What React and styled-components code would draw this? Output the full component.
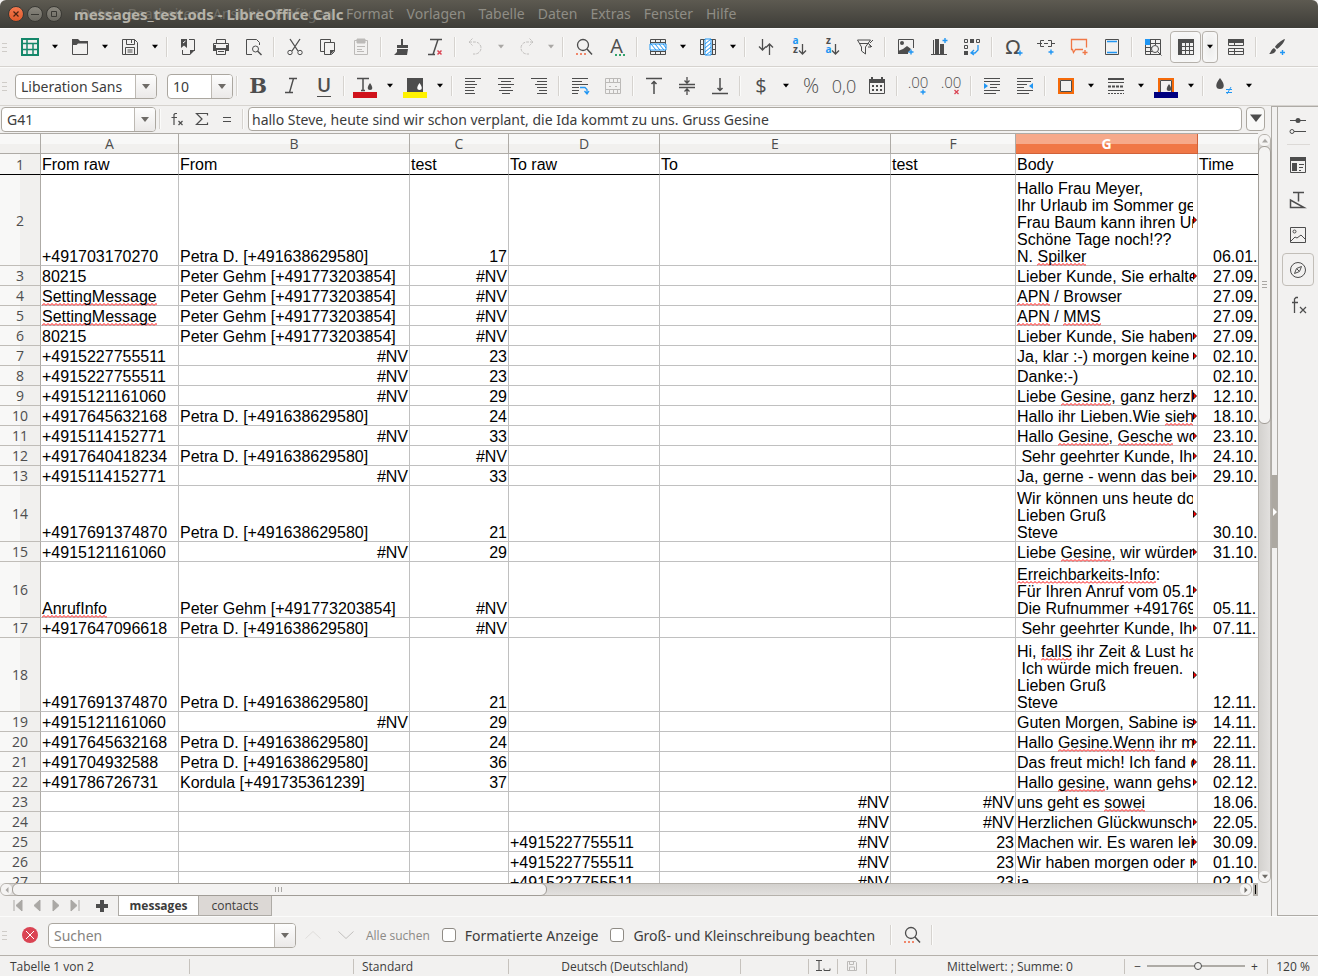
import { useState } from 'react';
import styled, { createGlobalStyle, css } from 'styled-components';

const DARK = '#4d4d4d';
const BLUE = '#2196f3';
const RED = '#da4453';
const ORANGE = '#f07746';

const GlobalStyle = createGlobalStyle`
  * {
    box-sizing: border-box;
  }
  body {
    margin: 0;
    background: #f2f1f0;
    color: #3c3c3c;
    font-family: 'Noto Sans', sans-serif;
    font-size: 14px;
  }
  button, input, select {
    font: inherit;
    color: inherit;
    margin: 0;
    padding: 0;
    border: 0;
    background: none;
    outline: none;
  }
  svg {
    flex: none;
    overflow: visible;
  }
`;

const Window = styled.div`
  display: flex;
  flex-direction: column;
  height: 100vh;
  overflow: hidden;
`;

/* title bar */
const TitleBar = styled.header`
  position: relative;
  display: flex;
  flex: none;
  align-items: center;
  height: 28px;
  padding-left: 8px;
  border-radius: 6px 6px 0 0;
  background: linear-gradient(#5d5a51, #3e3d38);
`;

const WindowButton = styled.button`
  display: flex;
  align-items: center;
  justify-content: center;
  width: 16px;
  height: 16px;
  margin-right: 3px;
  border: 1px solid #3a3934;
  border-radius: 50%;
  background: ${(p) => (p.$close ? 'linear-gradient(#f4794f, #e05a2b)' : 'linear-gradient(#8a877e, #6b6961)')};
`;

const MenuBar = styled.nav`
  display: flex;
  gap: 13px;
  margin-left: 15px;
`;

const MenuItem = styled.button`
  color: #8f8d85;
  line-height: 20px;
  opacity: ${(p) => (p.$faded ? 0.5 : 1)};
`;

const Title = styled.h1`
  position: absolute;
  left: 74px;
  margin: 0;
  color: #b5b2a8;
  font-size: 15px;
  font-weight: 700;
  line-height: 20px;
  pointer-events: none;
`;

/* toolbars */
const Toolbar = styled.div`
  display: flex;
  flex: none;
  align-items: center;
  height: 39px;
  padding: 0 0 1px 2px;
  border-top: 1px solid #fbfbfa;
  border-bottom: 1px solid #d6d3cf;
`;

const Grip = styled.span`
  flex: none;
  width: 5px;
  height: 9px;
  margin-right: ${(p) => p.$gap}px;
  background: repeating-linear-gradient(#cfccc8 0 1px, transparent 1px 4px);
`;

const IconButton = styled.button`
  display: flex;
  flex: none;
  align-items: center;
  justify-content: center;
  width: 33px;
  height: 32px;
  ${(p) =>
    p.$pressed &&
    css`
      width: 31px;
      margin: 0 1px;
      border: 1px solid #b5b1ab;
      border-radius: 4px;
      background: radial-gradient(#ececeb, #fafafa);
    `}
`;

const Drop = styled.button`
  display: flex;
  flex: none;
  align-items: center;
  justify-content: center;
  width: 17px;
  height: 32px;
  ${(p) =>
    p.$pressed &&
    css`
      width: 16px;
      margin-right: 1px;
      border: 1px solid #b5b1ab;
      border-radius: 4px;
      background: radial-gradient(#ececeb, #fafafa);
    `}
`;

const Sep = styled.span`
  flex: none;
  width: 2px;
  height: 20px;
  margin: 0 3px;
  border-left: 1px solid #d6d3cf;
  border-right: 1px solid #fbfbfa;
`;

const Combo = styled.div`
  position: relative;
  display: flex;
  flex: none;
  width: ${(p) => p.$width}px;
  height: 25px;
  margin: 1px ${(p) => p.$after || 0}px 0 0;
  border: 1px solid #aba7a0;
  border-radius: 4px;
  background: #fff;
  overflow: hidden;

  select,
  input {
    flex: 1;
    min-width: 0;
    padding-left: 5px;
    appearance: none;
    line-height: 23px;
  }
  input::placeholder {
    color: #86837f;
    opacity: 1;
  }
`;

const ComboArrow = styled.span`
  display: flex;
  flex: none;
  align-items: center;
  justify-content: center;
  width: 21px;
  border-left: 1px solid #bdb9b3;
  background: linear-gradient(#fdfdfd, #ebe9e8);
`;

/* formula bar and sheet */
const Work = styled.div`
  display: flex;
  flex: 1;
  min-height: 0;
`;

const Main = styled.main`
  display: flex;
  flex: 1;
  flex-direction: column;
  min-width: 0;
`;

const FormulaBar = styled.div`
  display: flex;
  flex: none;
  align-items: center;
  height: 27px;
  padding: 0 6px 1px 1px;
`;

const FormulaButton = styled.button`
  display: flex;
  align-items: center;
  justify-content: center;
  width: 25px;
  height: 24px;
`;

const FormulaInput = styled.input`
  flex: 1;
  height: 24px;
  min-width: 0;
  margin-left: 1px;
  padding-left: 3px;
  border: 1px solid #aba7a0;
  border-radius: 4px;
  background: #fff;
`;

const ExpandButton = styled.button`
  display: flex;
  align-items: center;
  justify-content: center;
  width: 19px;
  height: 24px;
  margin-left: 4px;
  border: 1px solid #aba7a0;
  border-radius: 4px;
  background: #f9f9f8;
`;

const SheetRow = styled.div`
  display: flex;
  flex: 1;
  min-height: 0;
`;

const Sheet = styled.div`
  flex: 1;
  min-width: 0;
  overflow: hidden;
  border-top: 1px solid #aeaba6;
  background: #fff;
`;

const Table = styled.table`
  width: 1298px;
  table-layout: fixed;
  border-collapse: separate;
  border-spacing: 0;
  color: #000;
  font-family: 'Liberation Sans', sans-serif;
  font-size: 16px;
  line-height: 17px;
`;

const ColHead = styled.th`
  height: 20px;
  padding: 0;
  border-right: 1px solid #aeaba6;
  border-bottom: 1px solid #aeaba6;
  background: linear-gradient(#f8f8f7 50%, #f1f0ee 50%);
  color: ${DARK};
  font-family: 'Open Sans', sans-serif;
  font-size: 14px;
  font-weight: 400;
  ${(p) =>
    p.$active &&
    css`
      border-color: #d0623a;
      background: linear-gradient(#f6a98a 50%, #f07746 50%);
      color: #fff;
      font-weight: 700;
    `}
`;

const RowHead = styled.th`
  height: ${(p) => p.$height}px;
  padding: 0;
  border-right: 1px solid #aeaba6;
  border-bottom: 1px solid ${(p) => (p.$frozen ? '#000' : '#c0bdb8')};
  background: linear-gradient(90deg, #f8f8f7 50%, #f1f0ee 50%);
  color: ${DARK};
  font-family: 'Open Sans', sans-serif;
  font-size: 14px;
  font-weight: 400;
`;

const Cell = styled.td`
  position: relative;
  padding: 0 1px ${(p) => (p.$frozen ? 1 : 0)}px;
  border-right: 1px solid #c0c0c0;
  border-bottom: 1px solid ${(p) => (p.$frozen ? '#000' : '#c0c0c0')};
  vertical-align: bottom;
  text-align: ${(p) => (p.$right ? 'right' : 'left')};
  white-space: pre;
`;

const Clip = styled.div`
  margin-right: 3px;
  overflow-x: clip;
`;

const DateText = styled.div`
  padding-left: 14px;
`;

const More = styled.svg`
  position: absolute;
  top: calc(50% - 4px);
  right: 0;
`;

const Misspelt = styled.span`
  padding-bottom: 1px;
  background: url("data:image/svg+xml,%3Csvg xmlns='http://www.w3.org/2000/svg' width='4' height='3'%3E%3Cpath d='M0 2.5L2 .5L4 2.5' fill='none' stroke='red'/%3E%3C/svg%3E")
    repeat-x left bottom;
`;

const VScroll = styled.div`
  display: flex;
  flex: none;
  flex-direction: column;
  width: 13px;
  margin-top: 1px;
  border: 1px solid #b5b1ab;
  border-radius: 6px;
  background: linear-gradient(90deg, #d3d1ce, #e2e0de);
`;

const HScroll = styled.div`
  display: flex;
  flex: 1;
  height: 13px;
  border: 1px solid #b5b1ab;
  border-radius: 6px;
  background: linear-gradient(#d3d1ce, #e2e0de);
`;

const HScrollRow = styled.div`
  display: flex;
  flex: none;
  padding-right: 13px;
`;

const SplitHandle = styled.span`
  width: 5px;
  margin-left: 1px;
  border: 2px solid #b5b1ab;
  background: #000;
`;

const ScrollArrow = styled.button`
  display: flex;
  flex: none;
  align-items: center;
  justify-content: center;
  width: 11px;
  height: 11px;
  border-radius: 5px;
  background: #f5f4f3;
`;

const Thumb = styled.div`
  display: flex;
  align-items: center;
  justify-content: center;
  border: 1px solid #a19d97;
  border-radius: 6px;
  background: #f4f3f2;
  ${(p) =>
    p.$vertical
      ? css`
          flex: 37 0 0;
          margin: 0 -1px;
        `
      : css`
          flex: 43 0 0;
          margin: -1px 0;
        `}
`;

const Rest = styled.div`
  flex: ${(p) => p.$grow} 0 0;
`;

const TabBar = styled.div`
  display: flex;
  flex: none;
  height: 20px;
  padding-left: 8px;
`;

const NavButton = styled.button`
  display: flex;
  align-items: center;
  justify-content: center;
  width: ${(p) => (p.$wide ? 34 : 19)}px;
`;

const Tab = styled.button`
  width: ${(p) => (p.$active ? 81 : 74)}px;
  margin-left: ${(p) => (p.$active ? 0 : -1)}px;
  border: 1px solid #aeaba6;
  border-top: 0;
  background: ${(p) => (p.$active ? '#fff' : '#dcd8d5')};
  font-family: 'Open Sans', sans-serif;
  font-size: 12px;
  font-weight: ${(p) => (p.$active ? 700 : 400)};
  line-height: 18px;
`;

const Splitter = styled.div`
  display: flex;
  flex: none;
  flex-direction: column;
  justify-content: center;
  width: 7px;
  border: 1px solid #aeaba6;
  border-bottom: 0;
`;

const SplitterButton = styled.button`
  display: flex;
  align-items: center;
  justify-content: center;
  height: 73px;
  background: #aca8a1;
`;

const Sidebar = styled.aside`
  display: flex;
  flex: none;
  flex-direction: column;
  align-items: center;
  width: 40px;
  padding-top: 1px;
  border-top: 1px solid #aeaba6;
  border-bottom: 1px solid #aeaba6;
`;

const SideButton = styled.button`
  display: flex;
  align-items: center;
  justify-content: center;
  width: 32px;
  height: 33px;
  margin-bottom: 2px;
  border: 1px solid ${(p) => (p.$active ? '#c2beb8' : 'transparent')};
  border-radius: 4px;
`;

const SideRule = styled.span`
  width: 23px;
  height: 1px;
  margin: 1px 0 3px;
  background: #dcd9d6;
`;

/* find bar and status bar */
const FindBar = styled.form`
  display: flex;
  flex: none;
  align-items: center;
  height: 39px;
  padding: 0 0 2px 2px;
  border-top: 1px solid #fbfbfa;
`;

const CloseButton = styled(IconButton)`
  margin-right: 2px;
`;

const FindAll = styled.button`
  margin: 0 12px 0 4px;
  color: #8b8986;
  font-family: 'Open Sans', sans-serif;
  font-size: 12px;
`;

const Check = styled.label`
  display: flex;
  align-items: center;
  margin-right: 12px;

  input {
    width: 14px;
    height: 14px;
    margin-right: 9px;
    appearance: none;
    border: 1px solid #8f8b85;
    border-radius: 3px;
    background: #fff;
  }
  input:checked {
    background: ${ORANGE};
  }
`;

const StatusBar = styled.footer`
  display: flex;
  flex: none;
  align-items: center;
  height: 21px;
  border-top: 1px solid #b5b1ab;
  font-family: 'Open Sans', sans-serif;
  font-size: 12px;
`;

const StatusCell = styled.div`
  display: flex;
  flex: ${(p) => (p.$grow ? '1 1 0' : 'none')};
  align-items: center;
  justify-content: ${(p) => (p.$left ? 'flex-start' : 'center')};
  width: ${(p) => p.$width}px;
  height: 15px;
  padding-left: ${(p) => p.$left || 0}px;
  border-right: 1px solid #c6c2bd;
  white-space: nowrap;
  &:last-child {
    border-right: 0;
  }
`;

const Zoom = styled.input`
  width: 98px;
  height: 10px;
  margin: 0 6px;
  appearance: none;
  &::-webkit-slider-runnable-track {
    height: 2px;
    background: #aeaba6;
  }
  &::-webkit-slider-thumb {
    width: 8px;
    height: 8px;
    margin-top: -3px;
    appearance: none;
    border: 1px solid ${DARK};
    border-radius: 50%;
    background: #f2f1f0;
  }
`;

const plus = (x, y, color = BLUE) => (
  <path d={`M${x - 2.5} ${y}h5M${x} ${y - 2.5}v5`} stroke={color} strokeWidth="1.4" />
);

const txt = (x, y, size, value, props) => (
  <text x={x} y={y} fontSize={size} fill={DARK} stroke="none" fontFamily="Open Sans, sans-serif" textAnchor="middle" {...props}>
    {value}
  </text>
);

const ICONS = {
  calc: (
    <g stroke="#15876a">
      <path strokeWidth="2" d="M4 4h16v16H4z" />
      <path strokeWidth="1.5" d="M4 8.5h16M4 14.5h16M9 4v16M15 8.5v12" />
    </g>
  ),
  open: (
    <>
      <path d="M4 10V4h6l2 2h8v2.500H10L8.500 10z" fill={DARK} stroke="none" />
      <path d="M4.500 8v11.500h15V8" />
    </>
  ),
  save: <path d="M4.500 4.500h12l3 3v12h-15zM8.500 4.500v5h8v-5M13.500 5v3M7.500 19.500v-7h9v7M9.500 15h5M9.500 17h5" />,
  exportPdf: (
    <>
      <path d="M5 4h6v9l-3-2.500L5 13z" fill={DARK} stroke="none" />
      <path d="M13 4.500h5.500V16M14 19.500H6.500V15M14.500 19v-3.500h4" />
      <path d="M7 8l2.500-2" stroke="#fff" />
      <path d="M14 15h5l-5 5z" fill={DARK} stroke="none" />
    </>
  ),
  print: (
    <>
      <path d="M7.500 8V4.500h9V8M7.500 15v4.500h9V15M9 16.500h6" />
      <path d="M4 10h3v6H4zM17 10h3v6h-3zM6 13h12v2H6z" fill={DARK} stroke="none" />
      <path d="M4.500 8.500h15v7h-3v-2h-9v2h-3z" />
    </>
  ),
  preview: (
    <>
      <path d="M10 19.500H4.500v-15h10l3 3V10M9 19.500h1" />
      <circle cx="13.500" cy="14" r="3" />
      <path d="M15.500 16l4 4" strokeWidth="1.400" />
    </>
  ),
  cut: (
    <>
      <path d="M7 4l8 12M17 4L9 16" strokeWidth="1.300" />
      <circle cx="7" cy="17.500" r="2.200" />
      <circle cx="17" cy="17.500" r="2.200" />
    </>
  ),
  copy: (
    <>
      <path d="M14.500 7V4.500h-10v12H8M8.500 7.500h10v9l-3 3h-7z" />
      <path d="M14 15h5l-5 5z" fill={DARK} stroke="none" />
    </>
  ),
  paste: (
    <g stroke="#bcbab8">
      <path d="M5.500 5.500h13v14h-13z" />
      <path d="M8 4h8v4H8z" fill="#bcbab8" />
      <path d="M8 11.500h8M8 14.500h5M8 16.500h7" />
    </g>
  ),
  clone: <path d="M11 4h2v6h5v3H7v-3h4zM7 14h11l-1 6H4l3-3z" fill={DARK} stroke="none" />,
  clear: (
    <>
      <path d="M7 4.500h12M15 4.500l-5 15M5 19.500h7" strokeWidth="1.500" />
      <path d="M14.500 15.500l4 4M18.500 15.500l-4 4" stroke={RED} strokeWidth="1.500" />
    </>
  ),
  undo: <path d="M8.500 3.500L5 7l3.500 3.500M5 7h6a6 6 0 0 1 0 12h-2" stroke="#c2c0be" strokeDasharray="3 1" />,
  redo: <path d="M15.500 3.500L19 7l-3.500 3.500M19 7h-6a6 6 0 0 0 0 12h2" stroke="#c2c0be" strokeDasharray="3 1" />,
  find: (
    <>
      <circle cx="11" cy="10" r="5.500" strokeWidth="1.300" />
      <path d="M15 14l5 5.500" strokeWidth="1.500" />
      <path d="M4 19h11" stroke="#f0876b" strokeWidth="2" strokeDasharray="2 2" />
    </>
  ),
  spell: (
    <>
      {txt(11.5, 18, 20, 'A')}
      <path d="M10 20h10" stroke="#2fa36b" strokeWidth="2" strokeDasharray="2 2" />
    </>
  ),
  row: (
    <>
      <path d="M4.500 4.500h15v15h-15zM4 7.500h16M4 16.500h16M9.500 4v4M14.500 4v4M9.500 16v4M14.500 16v4" />
      <path d="M4 9h16v6H4z" fill="#fff" stroke={BLUE} />
      <path d="M5 9l5 6M9 9l5 6M13 9l5 6M17 9l3 4" stroke={BLUE} />
    </>
  ),
  column: (
    <>
      <path d="M4.500 4.500h15v15h-15zM7.500 4v16M16.500 4v16M4 9.500h4M4 14.500h4M16 9.500h4M16 14.500h4" />
      <path d="M9 4h6v16H9z" fill="#fff" stroke={BLUE} />
      <path d="M9 9l6-5M9 13l6-5M9 17l6-5M10 20l5-4" stroke={BLUE} />
    </>
  ),
  sort: <path d="M8.500 4v11M5 11.500L8.500 15l3.500-3.500M15.500 20V9M12 12.500L15.500 9l3.500 3.500" strokeWidth="1.300" />,
  sortAsc: (
    <>
      {txt(8.5, 9, 10, 'a', { fill: BLUE, fontWeight: 700 })}
      {txt(8.5, 18, 10, 'z', { fontWeight: 700 })}
      <path d="M15.500 9v10M12 15.500l3.500 3.500 3.500-3.500" strokeWidth="1.300" />
    </>
  ),
  sortDesc: (
    <>
      {txt(8.5, 9, 10, 'z', { fontWeight: 700 })}
      {txt(8.5, 18, 10, 'a', { fill: BLUE, fontWeight: 700 })}
      <path d="M15.500 9v10M12 15.500l3.500 3.500 3.500-3.500" strokeWidth="1.300" />
    </>
  ),
  filter: (
    <>
      <path d="M4.500 5h13l-5 7v7l-4-3v-4z" />
      <path d="M7 8.500h9M17 8l3-3M15 12h3l-2-3 3 3" />
    </>
  ),
  image: (
    <>
      <path d="M14 18.500H4.500v-14h15V13" />
      <circle cx="8" cy="8" r="2" fill={DARK} stroke="none" />
      <path d="M4 19v-3l5-2 4-3 4 3-4 5z" fill={DARK} stroke="none" />
      {plus(17, 17)}
    </>
  ),
  chart: (
    <>
      <path d="M4 19.500h16M6.500 5v14" />
      <path d="M8 4h4v15H8zM13 9h4v10h-4z" fill={DARK} stroke="none" />
      {plus(18, 5.5)}
    </>
  ),
  pivot: (
    <>
      <path d="M4.500 4.500h3v3h-3zM16.500 4.500h3v3h-3zM4.500 10.500h3v3h-3z" />
      <path d="M10 4h4v4h-4zM4 16h4v4H4z" fill={DARK} stroke="none" />
      <path d="M18 10v5l-3 3h-3M14 15l-3 3 3 2" stroke={BLUE} strokeWidth="1.300" />
    </>
  ),
  symbol: (
    <>
      {txt(12, 19, 20, 'Ω', { fontFamily: 'DejaVu Sans, sans-serif' })}
      {plus(19, 18)}
    </>
  ),
  link: (
    <>
      <path d="M3 8.500h5M17 8.500h4M10 5.500H6.500v6H10M14 5.500h3.500v6H14M10 8.500h4" />
      {plus(17, 17)}
    </>
  ),
  comment: (
    <>
      <path d="M16 14.500H8.500l-2 3-1-3h-1v-10h15v8" stroke={ORANGE} strokeWidth="1.300" />
      {plus(18, 17.5, ORANGE)}
    </>
  ),
  headers: (
    <>
      <path d="M5.500 4.500h13v15h-13z" />
      <path d="M7 6.500h10M7 17.500h10" stroke={BLUE} strokeWidth="1.300" />
    </>
  ),
  printArea: (
    <>
      <path d="M4.500 4.500h15v15h-15zM4 8.500h16M4 12.500h8M4 16.500h8M9.500 4v16M14.500 4v6" />
      <path d="M4 4h5v6H4z" fill={BLUE} stroke="none" />
      <circle cx="14" cy="14" r="3.500" fill="#f2f1f0" />
      <path d="M16.500 16.500l4 4" />
    </>
  ),
  freeze: (
    <>
      <path d="M4 4h16v4H8v12H4z" fill={DARK} stroke="none" />
      <path d="M8 11.500h12M8 15.500h12M8 19.500h12M11.500 8v12M15.500 8v12M19.500 8v12" />
    </>
  ),
  split: (
    <>
      <path d="M4 4h16v4H4z" fill={DARK} stroke="none" />
      <path d="M4.500 4.500h15v6h-15zM4.500 13.500h15v6h-15zM10.500 8v3M10.500 13.500v6M4 16.500h16" />
    </>
  ),
  brush: (
    <>
      <path d="M20 4c-4 1-9 6-10 8l2 2c3-2 7-6 8-10zM9 13l2 2c-1 4-5 4-7 4 2-1 2-5 5-6z" fill={DARK} stroke="none" />
      {plus(17.5, 17.5)}
    </>
  ),
  bold: txt(12, 19, 21, 'B', { fontFamily: 'DejaVu Serif, serif', fontWeight: 700 }),
  italic: <path d="M10 4.500h8M14.500 4.500l-4 14M6 18.500h8" strokeWidth="1.400" />,
  underline: (
    <>
      {txt(12, 18, 19, 'U', { fontWeight: 600 })}
      <path d="M5 22.500h14" />
    </>
  ),
  fontColor: (
    <>
      <path d="M4 4.500h12M10 4.500v12M8 16.500h4" strokeWidth="1.500" />
      <path d="M17 9c3 4 3 7 0 7s-3-3 0-7z" fill={DARK} stroke="none" />
      <path d="M0 18h24v6H0z" fill="#d0121b" stroke="none" />
    </>
  ),
  highlight: (
    <>
      <path d="M4 4h16v15H4z" fill={DARK} stroke="none" />
      <path d="M16.500 9c3 4 3 7 0 7s-3-3 0-7z" fill="#fff" stroke="none" />
      <path d="M0 18h24v6H0z" fill="#fff200" stroke="none" />
    </>
  ),
  left: <path d="M4 4.500h16M4 7.500h10M4 10.500h12M4 13.500h10M4 16.500h9M4 19.500h10" />,
  center: <path d="M4 4.500h16M7 7.500h10M4 10.500h16M7 13.500h10M5 16.500h14M8 19.500h8" />,
  right: <path d="M4 4.500h16M10 7.500h10M8 10.500h12M10 13.500h10M12 16.500h8M10 19.500h10" />,
  wrap: (
    <>
      <path d="M4 4.500h16M4 7.500h10M4 10.500h16M4 13.500h7M4 16.500h7M4 19.500h6" />
      <path d="M12 13.500h5l2 2v4M16.500 17l2.500 3 2-3" stroke={BLUE} strokeWidth="1.300" />
    </>
  ),
  merge: <path d="M4.500 4.500h15v15h-15zM8.500 4v4M12.500 4v4M16.500 4v4M8.500 16v4M12.500 16v4M16.500 16v4M4 8.500h16M4 15.500h16M8 12.500h2M14 12.500h2" stroke="#bcbab8" />,
  top: <path d="M4 4.500h16M12 7v13M9.500 10L12 7.500l2.500 2.500" strokeWidth="1.500" />,
  middle: <path d="M4 10.500h16M4 13.500h16M12 3v6M9.500 6.500L12 9l2.500-2.500M12 21v-6M9.500 17.500L12 15l2.500 2.500" strokeWidth="1.300" />,
  bottom: <path d="M4 19.500h16M12 4v13M9.500 14l2.500 2.500 2.500-2.500" strokeWidth="1.500" />,
  currency: txt(12, 19, 20, '$'),
  percent: txt(12, 19, 20, '%', { fontWeight: 300 }),
  number: txt(12, 19, 18, '0,0', { fontWeight: 300 }),
  date: (
    <>
      <path d="M4.500 5.500h15v14h-15z" />
      <path d="M4 5h16v4H4zM6 3h2v3H6zM16 3h2v3h-2z" fill={DARK} stroke="none" />
      <path d="M7 12h10M7 16h10" strokeWidth="2" strokeDasharray="2 2" />
    </>
  ),
  addDecimal: (
    <>
      {txt(12, 14, 15, '.00', { fontWeight: 300 })}
      {plus(17, 18)}
    </>
  ),
  delDecimal: (
    <>
      {txt(12, 14, 15, '.00', { fontWeight: 300 })}
      <path d="M15.500 16l4 4M19.500 16l-4 4" stroke={RED} strokeWidth="1.300" />
    </>
  ),
  indent: (
    <>
      <path d="M4 4.500h16M4 7.500h16M10 10.500h10M10 13.500h7M4 16.500h16M4 19.500h12" />
      <path d="M4 9v6l4-3z" fill={BLUE} stroke="none" />
    </>
  ),
  outdent: (
    <>
      <path d="M4 4.500h16M4 7.500h14M4 10.500h10M4 13.500h7M4 16.500h16M4 19.500h12" />
      <path d="M20 9v6l-4-3z" fill={BLUE} stroke="none" />
    </>
  ),
  border: (
    <>
      <path d="M5 5h14v14H5z" stroke="#f56a0a" strokeWidth="2" />
      <path d="M6.500 6.500h11v11h-11z" />
    </>
  ),
  borderStyle: (
    <>
      <path d="M4 5h16" strokeWidth="2" />
      <path d="M4 8.500h16M4 16.500h16" />
      <path d="M4 12.500h16" strokeWidth="2" strokeDasharray="3 1" />
      <path d="M4 19.500h16" strokeDasharray="2 1" />
    </>
  ),
  borderColor: (
    <>
      <path d="M5 19V5h14v14" stroke="#f56a0a" strokeWidth="2" />
      <path d="M6.500 19V6.500h11V19" />
      <path d="M15 10c3 4 3 7 0 7s-3-3 0-7z" fill={DARK} stroke="none" />
      <path d="M0 18h24v6H0z" fill="#000080" stroke="none" />
    </>
  ),
  conditional: (
    <>
      <path d="M8 4c5 6 5 11 0 11s-5-5 0-11z" fill={DARK} stroke="none" />
      <path d="M14 15.500h6M14 18.500h6M19 13l-4 7" stroke={BLUE} />
    </>
  ),
  settings: (
    <>
      <path d="M4 7.500h16M8 18.500h12" />
      <circle cx="12" cy="7.500" r="2.500" fill={DARK} stroke="none" />
      <circle cx="6" cy="18.500" r="2" />
    </>
  ),
  properties: (
    <>
      <path d="M4.500 4.500h15v15h-15z" />
      <path d="M4 4h16v4H4zM6 10h5v8H6z" fill={DARK} stroke="none" />
      <path d="M13 11.500h5M13 14.500h4M13 17.500h2" />
    </>
  ),
  styles: <path d="M7 4.500h11M12.500 4.500v9M4.500 12v7.500H18z" strokeWidth="1.500" />,
  gallery: (
    <>
      <path d="M4.500 4.500h15v15h-15zM5 18l4-4 2 1 4-3 4 4" />
      <circle cx="8.500" cy="8.500" r="1.500" />
    </>
  ),
  navigator: (
    <>
      <circle cx="12" cy="12" r="7.500" />
      <path d="M15.500 8.500l-2 5-5 2 2-5zM11 11l2 2" />
    </>
  ),
  functions: (
    <>
      <path d="M12 4.500h-2L8.500 6v14M6 9.500h6" strokeWidth="1.300" />
      <path d="M14 14l6 6M20 14l-6 6" strokeWidth="1.200" />
    </>
  ),
  fx: (
    <>
      <path d="M12 6.500h-2l-1 1V18M6.500 10.500H12" strokeWidth="1.200" />
      <path d="M13.500 14l4 4M17.500 14l-4 4" strokeWidth="1.200" />
    </>
  ),
  sum: <path d="M17.500 8.500v-2h-11L12 12l-5.500 5.500h11v-2" strokeWidth="1.200" />,
  equals: <path d="M8 10.500h8M8 14.500h8" strokeWidth="1.200" />,
  close: (
    <>
      <circle cx="12" cy="12" r="8" fill={RED} stroke="none" />
      <path d="M8 8l8 8M16 8l-8 8" stroke="#fff" />
    </>
  ),
  prev: <path d="M4.500 15.500L12 8.500l7.500 7" stroke="#e0dedc" />,
  next: <path d="M4.500 8.500l7.500 7 7.500-7" stroke="#c2c0be" />,
  first: <path d="M8 6v11M16 6v11l-6-5.500z" fill="#aaa8a5" stroke="#aaa8a5" />,
  back: <path d="M15 6v11l-6-5.500z" fill="#aaa8a5" stroke="#aaa8a5" />,
  forward: <path d="M9 6v11l6-5.500z" fill="#aaa8a5" stroke="#aaa8a5" />,
  last: <path d="M16 6v11M8 6v11l6-5.500z" fill="#aaa8a5" stroke="#aaa8a5" />,
  add: <path d="M13 6v12M7 12h12" strokeWidth="4" />,
  insertMode: <path d="M5 6.500h6M8 6.500v10M5 16.500h6M13 14.500v2h6v-2" />,
  modified: <path d="M7.500 7.500h8l1 1v8h-9zM9.500 7.500v3h4v-3M9.500 16v-3h5v3" stroke="#bcbab8" />,
};

function Icon({ name }) {
  return (
    <svg width="24" height="24" viewBox="0 0 24 24" fill="none" stroke={DARK} aria-hidden="true">
      {ICONS[name]}
    </svg>
  );
}

const ARROWS = {
  down: 'M0 1h8L4 6z',
  up: 'M0 6h8L4 1z',
  left: 'M6 0v8L2 4z',
  right: 'M2 0v8l4-4z',
};

function Arrow({ dir = 'down', size = 8, color = '#6e6b67' }) {
  return (
    <svg width={size} height={size} viewBox="0 0 8 8" fill={color} aria-hidden="true">
      <path d={ARROWS[dir]} />
    </svg>
  );
}

const STANDARD = [
  'calc Neu', 'drop', 'open Öffnen', 'drop', 'save Speichern', 'drop', 'sep',
  'exportPdf Als-PDF-exportieren', 'print Drucken', 'preview Druckvorschau', 'sep',
  'cut Ausschneiden', 'copy Kopieren', 'paste Einfügen', 'sep',
  'clone Format-übertragen', 'clear Formatierung-löschen', 'sep',
  'undo Rückgängig', 'drop off', 'redo Wiederherstellen', 'drop off', 'sep',
  'find Suchen-und-Ersetzen', 'spell Rechtschreibung', 'sep',
  'row Zeile', 'drop', 'column Spalte', 'drop', 'sep',
  'sort Sortieren', 'sortAsc Aufsteigend', 'sortDesc Absteigend', 'filter AutoFilter', 'sep',
  'image Bild', 'chart Diagramm', 'pivot Pivot-Tabelle', 'sep',
  'symbol Sonderzeichen', 'link Hyperlink', 'comment Kommentar', 'headers Kopf-und-Fußzeilen', 'sep',
  'printArea Druckbereich', 'freeze* Fixieren', 'drop on', 'split Teilen', 'sep', 'brush Zeichnen',
];

const FORMATTING = [
  'sep', 'bold Fett', 'italic Kursiv', 'underline Unterstrichen', 'sep',
  'fontColor Schriftfarbe', 'drop', 'highlight Hintergrundfarbe', 'drop', 'sep',
  'left Linksbündig', 'center Zentriert', 'right Rechtsbündig', 'sep',
  'wrap Zeilenumbruch', 'merge Zellen-verbinden', 'sep',
  'top Oben', 'middle Mitte', 'bottom Unten', 'sep',
  'currency Währung', 'drop', 'percent Prozent', 'number Zahl', 'date Datum', 'sep',
  'addDecimal Dezimalstelle-hinzufügen', 'delDecimal Dezimalstelle-löschen', 'sep',
  'indent Einzug-vergrößern', 'outdent Einzug-verkleinern', 'sep',
  'border Umrandung', 'drop', 'borderStyle Rahmenstil', 'drop', 'borderColor Rahmenfarbe', 'drop', 'sep',
  'conditional Bedingte-Formatierung', 'drop',
];

function Tools({ items }) {
  return items.map((item, i) => {
    const [name, label] = item.split(' ');
    if (name === 'sep') return <Sep key={i} />;
    if (name === 'drop') {
      return (
        <Drop key={i} type="button" aria-label="Mehr" disabled={label === 'off'} $pressed={label === 'on'}>
          <Arrow size={6} color={label === 'off' ? '#a9a7a4' : '#000'} />
        </Drop>
      );
    }
    return (
      <IconButton key={i} type="button" aria-label={label.replace(/-/g, ' ')} $pressed={name.endsWith('*')}>
        <Icon name={name.replace('*', '')} />
      </IconButton>
    );
  });
}

const COLUMNS = [
  ['A', 138],
  ['B', 231],
  ['C', 99],
  ['D', 151],
  ['E', 231],
  ['F', 125],
  ['G', 182],
  ['', 100],
];

const PETRA = 'Petra D. [+491638629580]';
const PETER = 'Peter Gehm [+491773203854]';

// height, then the cells A to H; words between tildes are not in the dictionary
const ROWS = [
  [21, 'From raw', 'From', 'test', 'To raw', 'To', 'test', 'Body', 'Time'],
  [91, '+491703170270', PETRA, '17', '', '', '', 'Hallo Frau Meyer,\nIhr Urlaub im Sommer ge\nFrau Baum kann ihren Url\nSchöne Tage noch!??\nN. ~Spilker~>', '06.01.'],
  [20, '80215', PETER, '#NV', '', '', '', 'Lieber Kunde, Sie erhalte>', '27.09.'],
  [20, '~SettingMessage~', PETER, '#NV', '', '', '', '~APN~ / Browser', '27.09.'],
  [20, '~SettingMessage~', PETER, '#NV', '', '', '', '~APN~ / ~MMS~', '27.09.'],
  [20, '80215', PETER, '#NV', '', '', '', 'Lieber Kunde, Sie haben>', '27.09.'],
  [20, '+4915227755511', '#NV', '23', '', '', '', 'Ja, klar :-) morgen keine s>', '02.10.'],
  [20, '+4915227755511', '#NV', '23', '', '', '', 'Danke:-)', '02.10.'],
  [20, '+4915121161060', '#NV', '29', '', '', '', 'Liebe ~Gesine~, ganz herzli>', '12.10.'],
  [20, '+4917645632168', PETRA, '24', '', '', '', 'Hallo ihr Lieben.Wie ~sieh~>', '18.10.'],
  [20, '+4915114152771', '#NV', '33', '', '', '', 'Hallo ~Gesine~, ~Gesche~ wo>', '23.10.'],
  [20, '+4917640418234', PETRA, '#NV', '', '', '', ' Sehr geehrter Kunde, Ihr>', '24.10.'],
  [20, '+4915114152771', '#NV', '33', '', '', '', 'Ja, gerne - wenn das bei>', '29.10.'],
  [56, '+4917691374870', PETRA, '21', '', '', '', 'Wir können uns heute do\nLieben Gruß\nSteve>', '30.10.'],
  [20, '+4915121161060', '#NV', '29', '', '', '', 'Liebe ~Gesine~, wir würden>', '31.10.'],
  [56, '~AnrufInfo~', PETER, '#NV', '', '', '', '~Erreichbarkeits-Info~:\nFür Ihren Anruf vom 05.1\nDie Rufnummer +491769>', '05.11.'],
  [20, '+4917647096618', PETRA, '#NV', '', '', '', ' Sehr geehrter Kunde, Ihr>', '07.11.'],
  [74, '+4917691374870', PETRA, '21', '', '', '', 'Hi, ~fallS~ ihr Zeit & Lust ha\n Ich würde mich freuen.\nLieben Gruß\nSteve>', '12.11.'],
  [20, '+4915121161060', '#NV', '29', '', '', '', 'Guten Morgen, Sabine is>', '14.11.'],
  [20, '+4917645632168', PETRA, '24', '', '', '', 'Hallo ~Gesine.Wenn~ ihr m>', '22.11.'],
  [20, '+491704932588', PETRA, '36', '', '', '', 'Das freut mich! Ich fand d>', '28.11.'],
  [20, '+491786726731', 'Kordula [+491735361239]', '37', '', '', '', 'Hallo ~gesine~, wann gehs>', '02.12.'],
  [20, '', '', '', '', '#NV', '#NV', 'uns geht es ~sowei~', '18.06.'],
  [20, '', '', '', '', '#NV', '#NV', 'Herzlichen Glückwunsch>', '22.05.'],
  [20, '', '', '', '+4915227755511', '#NV', '23', 'Machen wir. Es waren lei>', '30.09.'],
  [20, '', '', '', '+4915227755511', '#NV', '23', 'Wir haben morgen oder n>', '01.10.'],
  [20, '', '', '', '+4915227755511', '#NV', '23', 'ja', '02.10.'],
];

function Words({ text }) {
  return text.split('~').map((part, i) => (i % 2 ? <Misspelt key={i}>{part}</Misspelt> : part));
}

function SheetCell({ text, col, frozen }) {
  const cut = text.endsWith('>');
  const body = <Words text={cut ? text.slice(0, -1) : text} />;
  let content = body;
  if (col === 6) content = <Clip>{body}</Clip>;
  if (col === 7 && !frozen) content = <DateText>{body}</DateText>;
  return (
    <Cell $right={text === '#NV' || /^\d\d$/.test(text)} $frozen={frozen}>
      {content}
      {cut && (
        <More width="4" height="8" viewBox="0 0 4 8" aria-hidden="true">
          <path d="M0 0l4 4-4 4z" fill="#000" />
          <path d="M1 2l2 2-2 2z" fill="#f00" stroke="#f00" strokeWidth=".5" />
        </More>
      )}
    </Cell>
  );
}

function Spreadsheet() {
  return (
    <Table>
      <colgroup>
        <col style={{ width: 41 }} />
        {COLUMNS.map(([name, width]) => (
          <col key={name} style={{ width }} />
        ))}
      </colgroup>
      <thead>
        <tr>
          <ColHead />
          {COLUMNS.map(([name]) => (
            <ColHead key={name} $active={name === 'G'}>
              {name}
            </ColHead>
          ))}
        </tr>
      </thead>
      <tbody>
        {ROWS.map(([height, ...cells], r) => (
          <tr key={r}>
            <RowHead $height={height} $frozen={r === 0}>
              {r + 1}
            </RowHead>
            {cells.map((text, c) => (
              <SheetCell key={c} text={text} col={c} frozen={r === 0} />
            ))}
          </tr>
        ))}
      </tbody>
    </Table>
  );
}

const MENU = ['Datei', 'Bearbeiten', 'Ansicht', 'Einfügen', 'Format', 'Vorlagen', 'Tabelle', 'Daten', 'Extras', 'Fenster', 'Hilfe'];

const PANELS = [
  ['properties', 'Eigenschaften'],
  ['styles', 'Formatvorlagen'],
  ['gallery', 'Galerie'],
  ['navigator', 'Navigator'],
  ['functions', 'Funktionen'],
];

function App() {
  const [formula, setFormula] = useState('hallo Steve, heute sind wir schon verplant, die Ida kommt zu uns. Gruss Gesine');
  const [zoom, setZoom] = useState(120);

  return (
    <Window>
      <GlobalStyle />
      <TitleBar>
        <WindowButton $close aria-label="Schließen">
          <svg width="8" height="8" stroke="#4a2312" strokeWidth="1.2"><path d="M1.500 1.500l5 5M6.500 1.500l-5 5" /></svg>
        </WindowButton>
        <WindowButton aria-label="Minimieren">
          <svg width="8" height="8" stroke="#3a3934"><path d="M0 4.500h8" /></svg>
        </WindowButton>
        <WindowButton aria-label="Maximieren">
          <svg width="8" height="8" fill="none" stroke="#3a3934"><path d="M1.500 1.500h5v5h-5z" /></svg>
        </WindowButton>
        <MenuBar>
          {MENU.map((name, i) => (
            <MenuItem key={name} $faded={i < 4}>
              {name}
            </MenuItem>
          ))}
        </MenuBar>
        <Title>messages_test.ods - LibreOffice Calc</Title>
      </TitleBar>

      <Toolbar>
        <Grip $gap={6} />
        <Tools items={STANDARD} />
      </Toolbar>

      <Toolbar>
        <Grip $gap={8} />
        <Combo $width={142} $after={10}>
          <select aria-label="Schriftart">
            <option>Liberation Sans</option>
          </select>
          <ComboArrow>
            <Arrow />
          </ComboArrow>
        </Combo>
        <Combo $width={66}>
          <select aria-label="Schriftgröße">
            <option>10</option>
          </select>
          <ComboArrow>
            <Arrow />
          </ComboArrow>
        </Combo>
        <Tools items={FORMATTING} />
      </Toolbar>

      <Work>
        <Main>
          <FormulaBar>
            <Combo $width={155}>
              <input aria-label="Namenfeld" defaultValue="G41" />
              <ComboArrow>
                <Arrow />
              </ComboArrow>
            </Combo>
            <Sep />
            <FormulaButton aria-label="Funktionsassistent">
              <Icon name="fx" />
            </FormulaButton>
            <FormulaButton aria-label="Summe">
              <Icon name="sum" />
            </FormulaButton>
            <FormulaButton aria-label="Funktion">
              <Icon name="equals" />
            </FormulaButton>
            <Sep />
            <FormulaInput aria-label="Eingabezeile" value={formula} onChange={(e) => setFormula(e.target.value)} />
            <ExpandButton aria-label="Eingabezeile erweitern">
              <Arrow size={12} color={DARK} />
            </ExpandButton>
          </FormulaBar>

          <SheetRow>
            <Sheet>
              <Spreadsheet />
            </Sheet>
            <VScroll>
              <ScrollArrow aria-label="Nach oben">
                <Arrow dir="up" size={6} color="#a9a7a4" />
              </ScrollArrow>
              <Thumb $vertical>
                <svg width="5" height="8" stroke="#a9a7a4"><path d="M0 .5h5M0 3.500h5M0 6.500h5" /></svg>
              </Thumb>
              <Rest $grow={60} />
              <ScrollArrow aria-label="Nach unten">
                <Arrow size={6} />
              </ScrollArrow>
            </VScroll>
          </SheetRow>

          <HScrollRow>
            <HScroll>
              <ScrollArrow aria-label="Nach links">
                <Arrow dir="left" size={6} color="#a9a7a4" />
              </ScrollArrow>
              <Thumb>
                <svg width="8" height="5" stroke="#a9a7a4"><path d="M.5 0v5M3.500 0v5M6.500 0v5" /></svg>
              </Thumb>
              <Rest $grow={56} />
              <ScrollArrow aria-label="Nach rechts">
                <Arrow dir="right" size={6} />
              </ScrollArrow>
            </HScroll>
            <SplitHandle />
          </HScrollRow>

          <TabBar>
            {['first', 'back', 'forward', 'last'].map((name) => (
              <NavButton key={name} aria-label={name}>
                <Icon name={name} />
              </NavButton>
            ))}
            <NavButton $wide aria-label="Tabelle hinzufügen">
              <Icon name="add" />
            </NavButton>
            <Tab $active>messages</Tab>
            <Tab>contacts</Tab>
          </TabBar>
        </Main>

        <Splitter>
          <SplitterButton aria-label="Seitenleiste ausblenden">
            <Arrow dir="right" size={8} color="#fff" />
          </SplitterButton>
        </Splitter>

        <Sidebar>
          <SideButton aria-label="Einstellungen">
            <Icon name="settings" />
          </SideButton>
          <SideRule />
          {PANELS.map(([name, label]) => (
            <SideButton key={name} aria-label={label} $active={name === 'navigator'}>
              <Icon name={name} />
            </SideButton>
          ))}
        </Sidebar>
      </Work>

      <FindBar onSubmit={(e) => e.preventDefault()}>
        <Grip $gap={6} />
        <CloseButton type="button" aria-label="Suchleiste schließen">
          <Icon name="close" />
        </CloseButton>
        <Combo $width={248}>
          <input aria-label="Suchen" placeholder="Suchen" />
          <ComboArrow>
            <Arrow />
          </ComboArrow>
        </Combo>
        <IconButton type="button" aria-label="Vorheriges">
          <Icon name="prev" />
        </IconButton>
        <IconButton type="button" aria-label="Nächstes">
          <Icon name="next" />
        </IconButton>
        <FindAll type="button">Alle suchen</FindAll>
        <Check>
          <input type="checkbox" />
          Formatierte Anzeige
        </Check>
        <Check>
          <input type="checkbox" />
          Groß- und Kleinschreibung beachten
        </Check>
        <Sep />
        <IconButton type="button" aria-label="Suchen und Ersetzen">
          <Icon name="find" />
        </IconButton>
        <Sep />
      </FindBar>

      <StatusBar>
        <StatusCell $width={190} $left={10}>
          Tabelle 1 von 2
        </StatusCell>
        <StatusCell $width={164} />
        <StatusCell $width={155} $left={8}>
          Standard
        </StatusCell>
        <StatusCell $width={232}>Deutsch (Deutschland)</StatusCell>
        <StatusCell $width={68} />
        <StatusCell $width={29}>
          <Icon name="insertMode" />
        </StatusCell>
        <StatusCell $width={29}>
          <Icon name="modified" />
        </StatusCell>
        <StatusCell $width={29} />
        <StatusCell $grow>Mittelwert: ; Summe: 0</StatusCell>
        <StatusCell $width={143}>
          <button aria-label="Verkleinern">−</button>
          <Zoom
            type="range"
            aria-label="Zoom"
            min="20"
            max="210"
            value={zoom}
            onChange={(e) => setZoom(Number(e.target.value))}
          />
          <button aria-label="Vergrößern">+</button>
        </StatusCell>
        <StatusCell $width={50}>{zoom} %</StatusCell>
      </StatusBar>
    </Window>
  );
}

export default App;
